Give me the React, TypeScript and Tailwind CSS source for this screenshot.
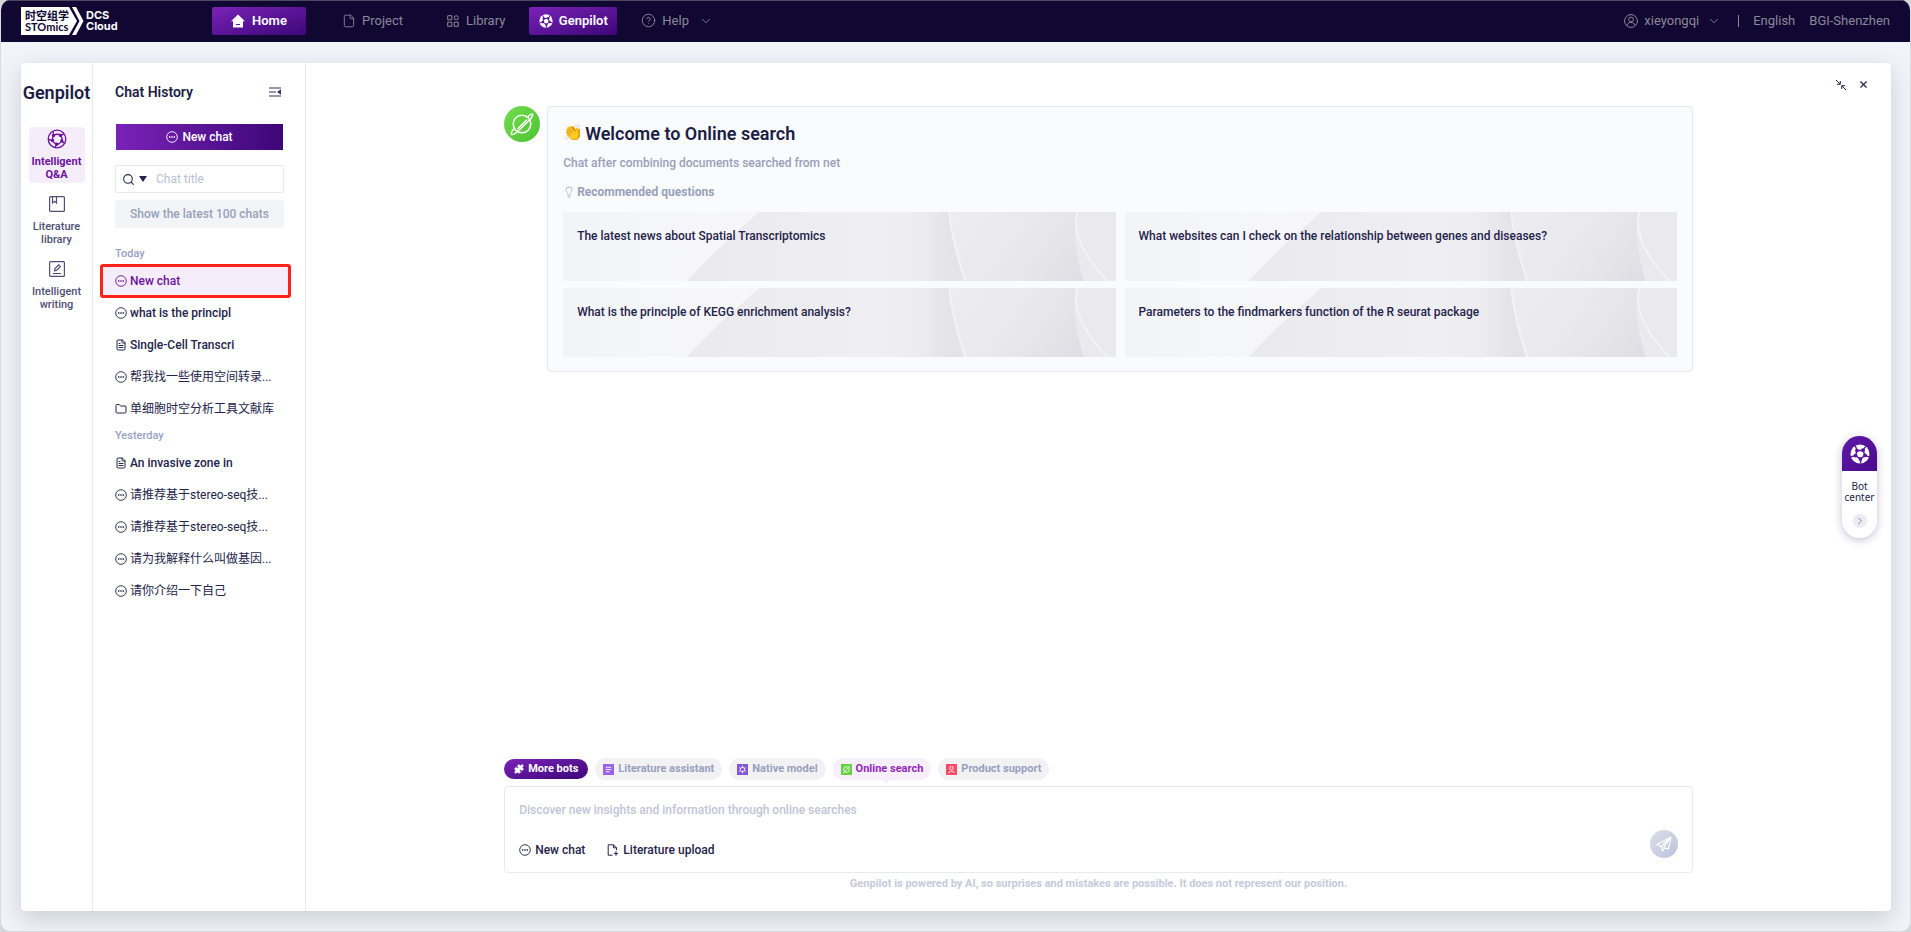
import type { ReactNode } from "react";
import { useState } from "react";
import { ChevronDown, ChevronRight, CircleHelp, File, FileText, Folder, Lightbulb, Puzzle, Search, X } from "lucide-react";

type ChatKind = "chat" | "doc" | "folder";

const today: { title: string; kind: ChatKind }[] = [
  { title: "New chat", kind: "chat" },
  { title: "what is the principl", kind: "chat" },
  { title: "Single-Cell Transcri", kind: "doc" },
  { title: "帮我找一些使用空间转录...", kind: "chat" },
  { title: "单细胞时空分析工具文献库", kind: "folder" },
];

const yesterday: { title: string; kind: ChatKind }[] = [
  { title: "An invasive zone in", kind: "doc" },
  { title: "请推荐基于stereo-seq技...", kind: "chat" },
  { title: "请推荐基于stereo-seq技...", kind: "chat" },
  { title: "请为我解释什么叫做基因...", kind: "chat" },
  { title: "请你介绍一下自己", kind: "chat" },
];

const questions = [
  "The latest news about Spatial Transcriptomics",
  "What websites can I check on the relationship between genes and diseases?",
  "What is the principle of KEGG enrichment analysis?",
  "Parameters to the findmarkers function of the R seurat package",
];

function ChatIcon({ className }: { className?: string }) {
  return (
    <svg viewBox="0 0 12 12" className={className} fill="none" stroke="currentColor" aria-hidden="true">
      <circle cx="6" cy="6" r="5.3" strokeWidth="0.9" />
      <path d="M3 6h1.4M5.3 6h1.4M7.6 6H9" strokeWidth="1.3" />
    </svg>
  );
}

function BallIcon({ className }: { className?: string }) {
  return (
    <svg viewBox="0 0 20 20" className={className} fill="none" stroke="currentColor" strokeWidth="1.3" aria-hidden="true">
      <circle cx="10" cy="10" r="8.8" />
      <path d="M6.500 6.500C9 5 12 5.200 13.600 6.400 15 8 15.400 10 14.800 12 13.500 14.200 12 15 9.800 15.200 7.500 14.500 6 13 5.500 11.400 5.200 9.500 5.600 8 6.500 6.500Z" />
      <path d="M6.500 6.500 6.200 2.300M13.600 6.400 17 4.800M14.800 12l2.800 2.500M9.800 15.200 8 18.400M5.500 11.400 1.500 10.500" />
      <g fill="currentColor" stroke="none">
        <circle cx="6.5" cy="6.5" r="1.7" />
        <circle cx="13.6" cy="6.4" r="1.7" />
        <circle cx="14.8" cy="12" r="1.7" />
        <circle cx="9.8" cy="15.2" r="1.7" />
        <circle cx="5.5" cy="11.4" r="1.7" />
      </g>
    </svg>
  );
}

function SolidBall({ className }: { className?: string }) {
  return (
    <svg viewBox="0 0 20 20" className={className} aria-hidden="true">
      <circle cx="10" cy="10" r="9.5" fill="#fff" />
      <g fill="none" stroke="#5a12a0" strokeWidth="1.4">
        <path d="M7 6.6 13 6.2 15 11.4 10.4 15 5.6 11.6Z" />
        <path d="M7 6.6 5.4 2M13 6.2 15.6 2.6M15 11.4l4 1.4M10.4 15l.4 4.4M5.6 11.6 1 12.8" />
      </g>
      <g fill="#5a12a0">
        <circle cx="7" cy="6.6" r="1.9" />
        <circle cx="13" cy="6.2" r="1.9" />
        <circle cx="15" cy="11.4" r="1.9" />
        <circle cx="10.4" cy="15" r="1.9" />
        <circle cx="5.6" cy="11.6" r="1.9" />
      </g>
    </svg>
  );
}

function PlanetIcon({ className }: { className?: string }) {
  return (
    <svg viewBox="0 0 24 24" className={className} fill="none" stroke="currentColor" strokeWidth="1.5" strokeLinecap="round" aria-hidden="true">
      <circle cx="12" cy="12" r="8.8" />
      <path d="M17.500 5.200C20 2.600 22 1.500 22.600 2.200 23.200 3 22 5 20.500 7L6.500 20.500C4 22.500 2 23 1.400 22.200 .9 21.400 2 19 4 16.800M8 16.500 16.500 8" />
    </svg>
  );
}

function Logo() {
  return (
    <svg width="100" height="28" viewBox="0 0 100 28" role="img" aria-label="STOmics DCS Cloud">
      <path d="M0 0H48L56 14 48 28H0Z" fill="#fff" />
      <path d="M51 0H55L62.500 14 55 28H51L58.500 14Z" fill="#fff" />
      <text x="4" y="13" fontSize="11" fontWeight="700" fill="#110733" className="font-['Noto_Sans_CJK_SC',sans-serif]">时空组学</text>
      <text x="4" y="24" fontSize="11" fontWeight="700" fill="#110733" className="font-[Lato,sans-serif]">STOmics</text>
      <text x="65" y="12" fontSize="11" fontWeight="700" fill="#fff" className="font-[Inter,sans-serif]">DCS</text>
      <text x="65" y="23" fontSize="11" fontWeight="700" fill="#fff" className="font-[Inter,sans-serif]">Cloud</text>
    </svg>
  );
}

function Header() {
  return (
    <header className="flex h-[42px] shrink-0 items-center border-t border-[#4b4a60] bg-[#110733] px-5 pb-[2px] text-[13px] text-[#8b8997]">
      <a href="#home" className="w-[191px]">
        <Logo />
      </a>
      <nav className="flex items-center">
        <a href="#home" className="flex h-7 w-[94px] items-center justify-center gap-[7px] rounded-xs bg-linear-to-br from-[#7b22b8] to-[#3d0678] font-semibold text-white">
          <svg viewBox="0 0 14 14" className="size-[14px]" aria-hidden="true">
            <path d="M7 .5 14 7.200H12V13.500H2V7.200H0Z" fill="#fff" />
            <path d="M5 10.500H9" stroke="#5a12a0" strokeWidth="1.200" />
          </svg>
          Home
        </a>
        <a href="#project" className="ml-9 flex items-center gap-[6px]">
          <File size={14} strokeWidth={1.5} />
          Project
        </a>
        <a href="#library" className="ml-11 flex items-center gap-[7px]">
          <svg viewBox="0 0 12 12" className="size-3" fill="none" stroke="currentColor" aria-hidden="true">
            <path d="M.7.700H4.800V4.800H.7ZM.7 7.200H4.800V11.300H.7ZM7.200 7.200H11.300V11.300H7.200Z" />
            <circle cx="9.250" cy="2.750" r="2.050" />
          </svg>
          Library
        </a>
        <a href="#genpilot" className="ml-6 flex h-7 w-[88px] items-center justify-center gap-[6px] rounded-xs bg-linear-to-br from-[#7b22b8] to-[#3d0678] font-semibold text-white">
          <SolidBall className="size-[14px]" />
          Genpilot
        </a>
        <button type="button" className="ml-6 flex items-center gap-[6px]">
          <CircleHelp size={15} strokeWidth={1.5} />
          Help
          <ChevronDown size={14} strokeWidth={1.5} className="ml-1" />
        </button>
      </nav>
      <div className="ml-auto flex items-center">
        <button type="button" className="flex items-center gap-[6px]">
          <svg viewBox="0 0 14 14" className="size-[14px]" fill="none" stroke="currentColor" aria-hidden="true">
            <circle cx="7" cy="7" r="6.400" />
            <circle cx="7" cy="5.500" r="2.400" />
            <path d="M3 11.500C3.600 9.200 5 8.500 7 8.500S10.400 9.200 11 11.500" />
          </svg>
          xieyongqi
          <ChevronDown size={14} strokeWidth={1.5} className="ml-[2px]" />
        </button>
        <span className="ml-[17px] h-3 w-px bg-[#8b8997]" />
        <button type="button" className="ml-[14px]">English</button>
        <span className="ml-[14px]">BGI-Shenzhen</span>
      </div>
    </header>
  );
}

function RailItem({ label, active, children }: { label: string; active?: boolean; children: ReactNode }) {
  return (
    <a
      href="#section"
      className={
        "flex h-14 w-14 flex-col items-center rounded-sm pt-[2px] text-center text-[11px] leading-[13px] " +
        (active ? "bg-[#f5eefa] font-bold text-[#6d149b]" : "font-medium text-[#4f5174]")
      }
    >
      <span className="mb-[6px] flex h-5 items-center">{children}</span>
      {label}
    </a>
  );
}

function Rail() {
  return (
    <nav className="flex w-[72px] shrink-0 flex-col items-center border-r border-[#e8e9f2]">
      <h1 className="mt-[18px] text-[18px] leading-6 font-semibold text-[#1d1d45]">Genpilot</h1>
      <div className="mt-[22px] flex flex-col gap-[9px]">
        <RailItem label="Intelligent Q&A" active>
          <BallIcon className="size-5" />
        </RailItem>
        <RailItem label="Literature library">
          <svg viewBox="0 0 16 16" className="size-4" fill="none" stroke="currentColor" strokeWidth="1.200" aria-hidden="true">
            <rect x=".6" y=".6" width="14.800" height="14.800" rx="1" />
            <path d="M3.500.600V7L5.500 5.300 7.500 7V.600" />
          </svg>
        </RailItem>
        <RailItem label="Intelligent writing">
          <svg viewBox="0 0 16 16" className="size-4" fill="none" stroke="currentColor" strokeWidth="1.200" aria-hidden="true">
            <rect x=".6" y=".6" width="14.800" height="14.800" rx="1" />
            <path d="M4 12.500H12M5.500 9.800 5.800 7.800 9.600 3.800 11.300 5.500 7.500 9.400Z" />
          </svg>
        </RailItem>
      </div>
    </nav>
  );
}

function ChatRow({ title, kind, selected, onClick }: { title: string; kind: ChatKind; selected: boolean; onClick: () => void }) {
  return (
    <button
      type="button"
      onClick={onClick}
      className={
        "-mr-[6px] -ml-[14px] flex h-8 items-center gap-[3px] pl-[14px] text-left text-[12px] " +
        (selected ? "rounded-xs bg-[#f5eefa] text-[#6d149b] outline-3 -outline-offset-2 outline-[#ff2419]" : "text-[#24234a]")
      }
    >
      {kind === "chat" && <ChatIcon className="size-3 shrink-0" />}
      {kind === "doc" && <FileText size={12} strokeWidth={2} className="shrink-0" />}
      {kind === "folder" && <Folder size={12} strokeWidth={2} className="shrink-0" />}
      <span className={/^[\x00-\x7f]+$/.test(title) ? "whitespace-nowrap" : "font-normal whitespace-nowrap"}>{title}</span>
    </button>
  );
}

function History() {
  const [selected, setSelected] = useState(0);

  return (
    <aside className="flex w-[213px] shrink-0 flex-col border-r border-[#e8e9f2] pr-[21px] pl-[22px] text-[12px] font-medium">
      <div className="mt-[17px] flex h-6 items-center justify-between">
        <h2 className="text-[14px] font-semibold text-[#1d1d45]">Chat History</h2>
        <button type="button" aria-label="Collapse history" className="pr-[3px] text-[#30305a]">
          <svg viewBox="0 0 12 10" className="h-[10px] w-3" aria-hidden="true">
            <path d="M0 1H12M0 5H7M0 9H12" stroke="currentColor" strokeWidth="1.200" />
            <path d="M8 5 12 2.300V7.700Z" fill="currentColor" />
          </svg>
        </button>
      </div>
      <button type="button" className="mx-px mt-5 flex h-[26px] items-center justify-center gap-1 bg-linear-to-r from-[#7b22b8] to-[#3d0678] text-white">
        <ChatIcon className="size-3" />
        New chat
      </button>
      <label className="mt-[15px] flex h-7 items-center rounded-xs border border-[#e6e8f3] pl-[6px] text-[#24234a]">
        <Search size={13} strokeWidth={2} className="shrink-0" />
        <svg viewBox="0 0 8 6" className="ml-1 h-[6px] w-2 shrink-0" aria-hidden="true">
          <path d="M0 0H8L4 6Z" fill="currentColor" />
        </svg>
        <input placeholder="Chat title" aria-label="Chat title" className="ml-[9px] w-full min-w-0 font-normal outline-none placeholder:text-[#b9bfd6]" />
      </label>
      <button type="button" className="mt-[7px] h-7 rounded-xs bg-[#f2f4f8] text-[#98a0b9]">
        Show the latest 100 chats
      </button>
      <h3 className="mt-[15px] h-[22px] text-[11px] leading-[22px] text-[#98a0c0]">Today</h3>
      {today.map((chat, i) => (
        <ChatRow key={i} {...chat} selected={selected === i} onClick={() => setSelected(i)} />
      ))}
      <h3 className="h-[22px] text-[11px] leading-[22px] text-[#98a0c0]">Yesterday</h3>
      {yesterday.map((chat, i) => (
        <ChatRow key={i} {...chat} selected={selected === i + 5} onClick={() => setSelected(i + 5)} />
      ))}
    </aside>
  );
}

function QuestionCard({ text }: { text: string }) {
  return (
    <button type="button" className="relative flex h-[69px] items-start overflow-hidden bg-[#ececf0] px-[14px] pt-4 text-left">
      <svg viewBox="0 0 552 69" preserveAspectRatio="none" className="absolute inset-0 size-full" aria-hidden="true">
        <defs>
          <linearGradient id="waveLeft" x1="0" y1="0" x2="1" y2="0">
            <stop offset="0" stopColor="#f3f4f8" />
            <stop offset="1" stopColor="#f7f7fa" />
          </linearGradient>
          <linearGradient id="waveMid" x1="124" y1="0" x2="386" y2="0" gradientUnits="userSpaceOnUse">
            <stop offset="0" stopColor="#e9e9ee" />
            <stop offset=".7" stopColor="#efeff3" />
            <stop offset=".88" stopColor="#ededf1" />
            <stop offset="1" stopColor="#e3e3e8" />
          </linearGradient>
          <linearGradient id="waveRight" x1="0" y1="0" x2="1" y2="0.300">
            <stop offset="0" stopColor="#ededf1" />
            <stop offset=".5" stopColor="#e9e9ed" />
            <stop offset="1" stopColor="#dedee4" />
          </linearGradient>
        </defs>
        <rect width="552" height="69" fill="url(#waveMid)" />
        <path d="M0 0H196C172 22 152 38 124 69H0Z" fill="url(#waveLeft)" />
        <path d="M386 0H552V69H402C394 45 388 22 386 0Z" fill="url(#waveRight)" />
        <path d="M514 0H552V69H520C512 40 508 20 514 0Z" fill="#e9e9ee" />
        <path d="M386 0C388 22 394 45 402 69M514 0C508 22 522 46 544 69" fill="none" stroke="#f3f3f7" strokeWidth="2" />
      </svg>
      <span className="relative leading-4">{text}</span>
    </button>
  );
}

function Welcome() {
  return (
    <section className="flex items-start gap-[7px] text-[12px]">
      <span className="flex size-9 shrink-0 items-center justify-center rounded-full bg-linear-to-br from-[#72dd4c] to-[#4cc432] text-white">
        <PlanetIcon className="size-6" />
      </span>
      <div className="flex-1 rounded-sm border border-[#e6e8f3] bg-[#fafbfd] px-[15px] pt-[14px] pb-[14px]">
        <h2 className="flex h-6 items-center text-[18px] font-semibold text-[#1d1d45]">
          <span className="w-[22px] text-[16px]">👏</span>
          Welcome to Online search
        </h2>
        <p className="mt-[10px] leading-4 font-medium text-[#98a0b9]">Chat after combining documents searched from net</p>
        <p className="mt-[13px] flex items-center gap-[2px] leading-4 font-bold text-[#98a0b9]">
          <Lightbulb size={12} strokeWidth={1.5} />
          Recommended questions
        </p>
        <div className="mt-3 grid grid-cols-2 gap-x-[9px] gap-y-[7px] font-medium text-[#24234a]">
          {questions.map((q) => (
            <QuestionCard key={q} text={q} />
          ))}
        </div>
      </div>
    </section>
  );
}

function BotTab({ label, active, children }: { label: string; active?: boolean; children: ReactNode }) {
  return (
    <button
      type="button"
      className={
        "relative flex h-[22px] items-center gap-1 rounded-full px-2 " +
        (active ? "bg-[#f7effb] text-[#9427b8]" : "bg-[#f2f2f5] text-[#98a0bc]")
      }
    >
      <svg viewBox="0 0 10 10" className="size-[11px]" fill="none" stroke="#fff" strokeWidth=".8" aria-hidden="true">
        {children}
      </svg>
      {label}
      {active && <span className="absolute top-full left-1/2 border-x-4 border-t-4 border-x-transparent border-t-[#f7effb]" />}
    </button>
  );
}

function Composer() {
  return (
    <section className="mt-auto font-medium">
      <div className="flex items-center gap-[7px] text-[11px] font-bold">
        <button type="button" className="flex h-5 items-center gap-1 rounded-full bg-linear-to-br from-[#7b22b8] to-[#3d0678] px-[10px] text-white">
          <Puzzle size={10} fill="#fff" />
          More bots
        </button>
        <BotTab label="Literature assistant">
          <rect width="10" height="10" fill="#9a62e8" stroke="none" />
          <path d="M2.500 3H7.500M2.500 5H7.500M2.500 7H6" />
        </BotTab>
        <BotTab label="Native model">
          <rect width="10" height="10" fill="#8257de" stroke="none" />
          <circle cx="5" cy="5" r="2" />
          <path d="M5 1.500V3M5 7V8.500M2 3.300 3.300 4M6.700 6 8 6.700M8 3.300 6.700 4M3.300 6 2 6.700" />
        </BotTab>
        <BotTab label="Online search" active>
          <rect width="10" height="10" fill="#62d241" stroke="none" />
          <circle cx="5" cy="5" r="2.600" />
          <path d="M2 8.200 8.200 1.800" />
        </BotTab>
        <BotTab label="Product support">
          <rect width="10" height="10" fill="#fb4a63" stroke="none" />
          <circle cx="5" cy="3.800" r="1.600" />
          <path d="M2.300 8.200C2.800 6 7.200 6 7.700 8.200" />
        </BotTab>
      </div>
      <div className="mt-[6px] flex h-[87px] flex-col rounded-sm border border-[#e8eaf1] px-[14px] pt-[15px] pb-[14px] text-[12px] text-[#24234a]">
        <textarea
          aria-label="Message"
          placeholder="Discover new insights and information through online searches"
          className="h-4 resize-none overflow-hidden leading-4 outline-none placeholder:text-[#bfc4d8]"
        />
        <div className="mt-auto flex h-4 items-center">
          <button type="button" className="flex items-center gap-1">
            <ChatIcon className="size-3" />
            New chat
          </button>
          <button type="button" className="ml-[22px] flex items-center gap-1">
            <svg viewBox="0 0 12 12" className="size-3" fill="none" stroke="currentColor" aria-hidden="true">
              <path d="M5.500 11.200H1.200V.800H6.500L9.500 3.800V6M6.500.800V3.800H9.500M9 7.200V11.800M7 9.500H11" />
            </svg>
            Literature upload
          </button>
          <button type="button" aria-label="Send" className="ml-auto -mt-3 flex size-7 items-center justify-center rounded-full bg-linear-to-br from-[#dcdfe9] to-[#bcc2db] text-white">
            <svg viewBox="0 0 16 16" className="size-4" fill="none" stroke="currentColor" strokeWidth="1.200" strokeLinejoin="round" aria-hidden="true">
              <path d="M15 1 1 8.500 5 10.500 15 1 7.500 11.500 12.500 13ZM5 10.500 6.500 15 8.500 12" />
            </svg>
          </button>
        </div>
      </div>
      <p className="mt-[3px] text-center text-[11px] leading-4 font-bold text-[#c6cadb]">
        Genpilot is powered by AI, so surprises and mistakes are possible. It does not represent our position.
      </p>
    </section>
  );
}

function BotCenter() {
  return (
    <button type="button" className="absolute top-[373px] right-[14px] flex w-[35px] flex-col items-center overflow-hidden rounded-full bg-white pb-[10px] font-['Noto_Sans',sans-serif] text-[10px] leading-[11px] text-[#24234a] shadow-[0_2px_8px_rgba(60,50,120,0.3)]">
      <span className="flex h-[35px] w-full items-center justify-center bg-linear-to-br from-[#5f18a8] to-[#4a0c8c]">
        <SolidBall className="size-5" />
      </span>
      <span className="mt-[10px]">Bot center</span>
      <span className="mt-[11px] flex size-[14px] items-center justify-center rounded-full bg-[#ecedf4] text-[#8086a5]">
        <ChevronRight size={12} />
      </span>
    </button>
  );
}

export default function App() {
  return (
    <div className="bg-[#d5d6da] font-[Roboto,'Noto_Sans_CJK_SC',sans-serif]">
      <div className="flex min-h-screen flex-col overflow-hidden rounded-[10px] border border-t-0 border-[#d9dbe2] bg-[#f1f4f9]">
        <Header />
        <main className="relative mt-[21px] mr-[19px] mb-5 ml-5 flex flex-1 rounded-sm bg-white shadow-[0_8px_24px_rgba(60,75,85,0.22)]">
          <Rail />
          <History />
          <div className="flex flex-1 flex-col items-center pt-[43px] pb-[19px]">
            <div className="flex w-3/4 flex-1 flex-col">
              <Welcome />
              <Composer />
            </div>
          </div>
          <div className="absolute top-[16px] right-[22px] flex items-center gap-3 text-[#24234a]">
            <button type="button" aria-label="Shrink">
              <svg viewBox="0 0 10 10" className="size-[10px]" fill="none" stroke="currentColor" aria-hidden="true">
                <path d="M0 0 4 4M4.300 1V4.300H1M10 10 6 6M5.700 9V5.700H9" />
              </svg>
            </button>
            <button type="button" aria-label="Close">
              <X size={11} strokeWidth={2.5} />
            </button>
          </div>
          <BotCenter />
        </main>
      </div>
    </div>
  );
}
